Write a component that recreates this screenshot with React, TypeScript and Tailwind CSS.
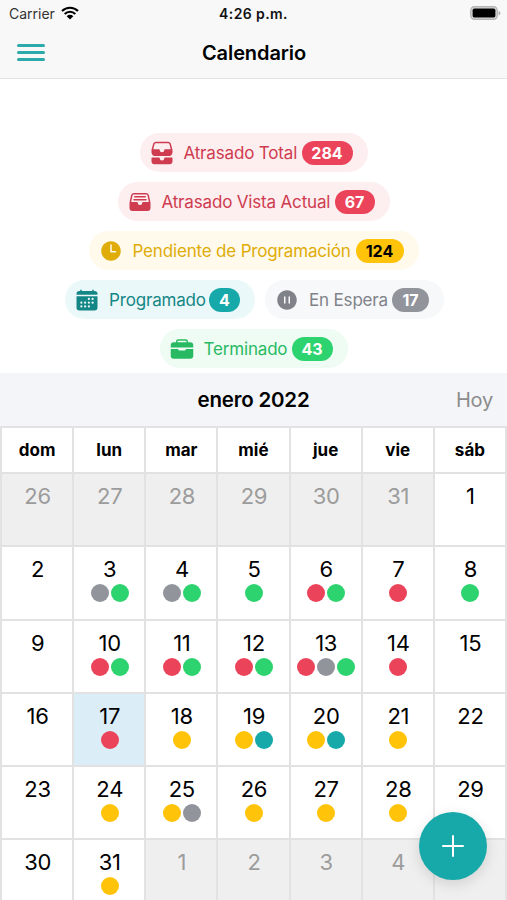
import React from "react";
import clsx from "clsx";
import {
  IoBriefcase,
  IoCalendar,
  IoFileTrayFull,
  IoFileTrayStacked,
  IoPauseCircle,
  IoTime,
} from "react-icons/io5";

type Status = "late" | "pending" | "scheduled" | "waiting" | "done";

type ChipProps = {
  icon: React.ReactNode;
  label: string;
  count: number;
  className: string;
  badgeClassName: string;
};

const dotColors: Record<Status, string> = {
  late: "bg-[#eb445a]",
  pending: "bg-[#ffc409]",
  scheduled: "bg-[#17a9a9]",
  waiting: "bg-[#92949c]",
  done: "bg-[#2dd36f]",
};

const weekdays = ["dom", "lun", "mar", "mié", "jue", "vie", "sáb"];

const events: Record<number, Status[]> = {
  3: ["waiting", "done"],
  4: ["waiting", "done"],
  5: ["done"],
  6: ["late", "done"],
  7: ["late"],
  8: ["done"],
  10: ["late", "done"],
  11: ["late", "done"],
  12: ["late", "done"],
  13: ["late", "waiting", "done"],
  14: ["late"],
  17: ["late"],
  18: ["pending"],
  19: ["pending", "scheduled"],
  20: ["pending", "scheduled"],
  21: ["pending"],
  24: ["pending"],
  25: ["pending", "waiting"],
  26: ["pending"],
  27: ["pending"],
  28: ["pending"],
  31: ["pending"],
};

// January 2022 starts on a Saturday
const days = Array.from({ length: 42 }, (_, i) => {
  const day = i - 5;
  if (day < 1) return { day: day + 31, outside: true };
  if (day > 31) return { day: day - 31, outside: true };
  return { day, outside: false };
});

function Chip({ icon, label, count, className, badgeClassName }: ChipProps) {
  return (
    <div
      className={clsx(
        "flex h-[39px] shrink-0 items-center rounded-full pl-[10px]",
        className
      )}
    >
      <span className="text-[24px]">{icon}</span>
      <span className="ml-[10px] flex-1 whitespace-nowrap pt-[2px] text-[17px] tracking-[-0.17px]">
        {label}
      </span>
      <span
        className={clsx(
          "mr-[15px] flex h-[24px] items-center justify-center rounded-full text-[16px] font-bold",
          badgeClassName
        )}
      >
        {count}
      </span>
    </div>
  );
}

function StatusBar() {
  return (
    <div className="relative flex h-[27px] items-center justify-between pl-[9px] pr-[6px] text-[14px]">
      <div className="flex items-center gap-[6px] text-[#333]">
        <span>Carrier</span>
        <svg width="18" height="14" viewBox="0 0 18 14" fill="none" className="-mt-px">
          <path
            d="M1 5.1a11.4 11.4 0 0 1 16 0M3.7 8a7.5 7.5 0 0 1 10.6 0"
            stroke="#000"
            strokeWidth="2.1"
          />
          <path d="M5.7 10.2a4.7 4.7 0 0 1 6.6 0L9 13.6z" fill="#000" />
        </svg>
      </div>
      <span className="absolute left-1/2 -translate-x-1/2 text-[14px] font-semibold tracking-[0.4px] text-[#111]">
        4:26 p.m.
      </span>
      <svg width="31" height="14" viewBox="0 0 31 14" className="-mt-px">
        <rect x="0.8" y="0.8" width="26.4" height="12.4" rx="3.6" fill="#ddd" stroke="#b5b5b5" strokeWidth="1.4" />
        <rect x="2.6" y="2.6" width="22.8" height="8.8" rx="1.6" fill="#000" />
        <path d="M28.6 5v4.4q1.7-.6 1.7-2.2T28.6 5z" fill="#aaa" />
      </svg>
    </div>
  );
}

export default function App() {
  return (
    <div className="relative h-[900px] w-[507px] overflow-hidden bg-white font-[Inter,sans-serif] text-black">
      <header className="h-[79px] border-b border-[#e4e4e4] bg-[#f8f8f8]">
        <StatusBar />
        <div className="relative flex h-[51px] items-center justify-center">
          <button className="absolute left-[17px] top-[17px] flex flex-col gap-[4px]" aria-label="Menú">
            <span className="h-[3px] w-[28px] rounded-full bg-[#2ba9ab]" />
            <span className="h-[3px] w-[28px] rounded-full bg-[#2ba9ab]" />
            <span className="h-[3px] w-[28px] rounded-full bg-[#2ba9ab]" />
          </button>
          <h1 className="pl-px text-[20px] font-semibold tracking-[-0.1px]">Calendario</h1>
        </div>
      </header>

      <section className="flex h-[294px] flex-col items-center gap-[10px] pt-[54px]">
        <Chip
          icon={<IoFileTrayStacked />}
          label="Atrasado Total"
          count={284}
          className="w-[228px] bg-[#fdeef0] text-[#cf3c4f]"
          badgeClassName="w-[51px] bg-[#eb445a] text-white"
        />
        <Chip
          icon={<IoFileTrayFull />}
          label="Atrasado Vista Actual"
          count={67}
          className="w-[272px] bg-[#fdeef0] text-[#cf3c4f]"
          badgeClassName="w-[40px] bg-[#eb445a] text-white"
        />
        <Chip
          icon={<IoTime />}
          label="Pendiente de Programación"
          count={124}
          className="w-[330px] bg-[#fffaeb] text-[#e0ac08]"
          badgeClassName="w-[48px] bg-[#ffc409] text-black"
        />
        <div className="flex gap-[10px] pl-[2px]">
          <Chip
            icon={<IoCalendar />}
            label="Programado"
            count={4}
            className="w-[190px] bg-[#ebf8f9] text-[#148685]"
            badgeClassName="w-[31px] bg-[#17a9a9] text-white"
          />
          <Chip
            icon={<IoPauseCircle />}
            label="En Espera"
            count={17}
            className="w-[179px] bg-[#f6f8f9] text-[#808289]"
            badgeClassName="w-[37px] bg-[#92949c] text-white"
          />
        </div>
        <Chip
          icon={<IoBriefcase />}
          label="Terminado"
          count={43}
          className="w-[188px] bg-[#eefcf3] text-[#28ba62]"
          badgeClassName="w-[41px] bg-[#2dd36f] text-white"
        />
      </section>

      <section>
        <div className="grid h-[53px] grid-cols-3 items-center bg-[#f3f5f9]">
          <h2 className="col-start-2 pt-px text-center text-[20.5px] font-semibold tracking-[-0.2px]">
            enero 2022
          </h2>
          <button className="pr-[14px] text-right text-[20px] tracking-[-0.2px] text-[#8c8c8c]">Hoy</button>
        </div>

        <div className="grid h-[48px] w-[507px] grid-cols-7 border-y-2 border-l-2 border-[#e2e2e2]">
          {weekdays.map((name) => (
            <div
              key={name}
              className="flex items-center justify-center border-r-2 border-[#e2e2e2] pt-[2px] text-[17px] font-bold"
            >
              {name}
            </div>
          ))}
        </div>

        <div className="grid w-[507px] auto-rows-[73.3px] grid-cols-7 border-l-2 border-[#e2e2e2]">
          {days.map(({ day, outside }, i) => (
            <div
              key={i}
              className={clsx(
                "border-b-2 border-r-2 border-[#e2e2e2] pt-[7px] pl-px text-center",
                outside && "bg-[#efefef] text-[#9c9c9c]",
                !outside && day === 17 && "bg-[#dbedf7]"
              )}
            >
              <div className="text-[22px] leading-[30px] tracking-[-0.3px]">{day}</div>
              <div className="flex justify-center gap-[2px]">
                {!outside &&
                  events[day]?.map((status) => (
                    <span
                      key={status}
                      className={clsx("size-[18px] rounded-full", dotColors[status])}
                    />
                  ))}
              </div>
            </div>
          ))}
        </div>
      </section>

      <button
        className="absolute left-[419px] top-[812px] flex size-[68px] items-center justify-center rounded-full bg-[#17a9a9] shadow-[0_4px_14px_rgba(0,0,0,0.13)]"
        aria-label="Agregar"
      >
        <svg width="22" height="22" viewBox="0 0 22 22" stroke="#fff" strokeWidth="2" strokeLinecap="round">
          <path d="M11 1v20M1 11h20" />
        </svg>
      </button>
    </div>
  );
}
